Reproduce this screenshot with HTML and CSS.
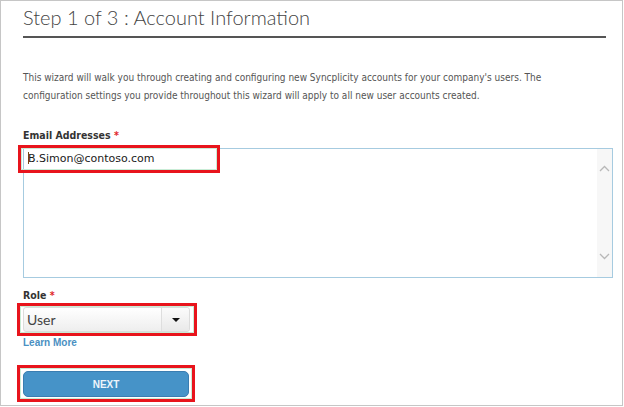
FILE: index.html
```html
<!DOCTYPE html>
<html>
<head>
<meta charset="utf-8">
<link rel="stylesheet" href="styles.css">
</head>
<body>
<div class="frame">
  <h1 class="title">Step 1 of 3 : Account Information</h1>
  <p class="intro">This wizard will walk you through creating and configuring new Syncplicity accounts for your company's users. The configuration settings you provide throughout this wizard will apply to all new user accounts created.</p>

  <div class="label">Email Addresses <span class="req">*</span></div>
  <div class="textarea">
    <div class="ta-content">
      <span class="caret"></span>B.Simon@contoso.com
    </div>
    <div class="ta-scroll">
      <svg class="chev" width="11" height="7" viewBox="0 0 11 7"><path d="M1 6 L5.5 1.5 L10 6" fill="none" stroke="#b8b8b8" stroke-width="1.3"/></svg>
      <svg class="chev" width="11" height="7" viewBox="0 0 11 7"><path d="M1 1 L5.5 5.5 L10 1" fill="none" stroke="#b8b8b8" stroke-width="1.3"/></svg>
    </div>
    <div class="mark mark-email"></div>
  </div>

  <div class="label role-label">Role <span class="req">*</span></div>
  <div class="select-wrap">
    <div class="select">
      <span class="select-value">User</span>
      <span class="select-btn"><span class="tri"></span></span>
    </div>
    <div class="mark mark-select"></div>
  </div>
  <a class="learn">Learn More</a>

  <div class="btn-wrap">
    <button class="next">NEXT</button>
    <div class="mark mark-next"></div>
  </div>
</div>
</body>
</html>
```

FILE: styles.css
```css
html, body {
  margin: 0;
  padding: 0;
  background: #fff;
}
.frame {
  box-sizing: border-box;
  width: 623px;
  height: 406px;
  border: 1px solid #c6c6c6;
  padding: 0 9px 0 22px;
  font-family: "DejaVu Sans Condensed", "Liberation Sans", sans-serif;
}
.title {
  margin: 0 7px 0 0;
  padding: 3px 0 0 0;
  height: 32px;
  border-bottom: 2px solid #555;
  font-family: Lato, "Open Sans", sans-serif;
  font-weight: 300;
  font-size: 20px;
  line-height: 26px;
  color: #444;
}
.intro {
  margin: 31px 0 0 0;
  max-width: 560px;
  font-size: 10px;
  line-height: 18px;
  color: #555;
}
.label {
  margin-top: 23px;
  font-size: 10.5px;
  line-height: 14px;
  font-weight: bold;
  color: #333;
}
.req {
  color: #e0262a;
}
.textarea {
  position: relative;
  margin-top: 6px;
  height: 130px;
  box-sizing: border-box;
  border: 1px solid #a6cbe0;
  display: flex;
}
.ta-content {
  flex: 1;
  padding: 3px 0 0 4px;
  font-family: "DejaVu Sans", sans-serif;
  font-size: 11px;
  line-height: 14px;
  color: #1a1a1a;
  position: relative;
}
.caret {
  display: inline-block;
  width: 1px;
  height: 12px;
  background: #7a4a10;
  vertical-align: -2px;
  margin-right: -1px;
}
.ta-scroll {
  width: 15px;
  background: #f7f7f7;
  display: flex;
  flex-direction: column;
  justify-content: space-between;
  align-items: center;
  padding: 16px 0 17px;
}
.chev {
  display: block;
}
.mark {
  position: absolute;
  border: 3px solid #e8141c;
  box-shadow: inset 0 0 0 1px #c9ecd6;
  pointer-events: none;
}
.mark-email {
  left: -6px;
  top: -4px;
  width: 196px;
  height: 22px;
}
.role-label {
  margin-top: 10px;
}
.select-wrap {
  position: relative;
  margin-top: 5px;
  width: 167px;
}
.select {
  box-sizing: border-box;
  height: 25px;
  border: 1px solid #dcdcdc;
  border-radius: 3px;
  background: linear-gradient(#ffffff, #eeeeee);
  display: flex;
  align-items: stretch;
}
.select-value {
  flex: 1;
  padding-left: 3px;
  font-family: Lato, "Open Sans", sans-serif;
  font-size: 14px;
  line-height: 23px;
  color: #444;
}
.select-btn {
  width: 27px;
  border-left: 1px solid #dedede;
  display: flex;
  align-items: center;
  justify-content: center;
  background: linear-gradient(#fbfbfb, #e9e9e9);
  border-radius: 0 3px 3px 0;
}
.tri {
  width: 0;
  height: 0;
  border-left: 4px solid transparent;
  border-right: 4px solid transparent;
  border-top: 4px solid #111;
}
.mark-select {
  left: -6px;
  top: -4px;
  right: -7px;
  bottom: -4px;
}
.learn {
  display: block;
  margin-top: 5px;
  font-family: "Liberation Sans", sans-serif;
  font-size: 10px;
  line-height: 11px;
  font-weight: bold;
  color: #4a90c2;
}
.btn-wrap {
  position: relative;
  margin-top: 23px;
  width: 166px;
}
.next {
  display: block;
  box-sizing: border-box;
  width: 166px;
  height: 26px;
  border: 1px solid #3a7db1;
  border-radius: 5px;
  background: #4693c8;
  color: #eef5fb;
  font-family: "Liberation Sans", sans-serif;
  font-weight: bold;
  font-size: 10px;
  padding: 0;
}
.mark-next {
  left: -6px;
  top: -6px;
  right: -6px;
  bottom: -5px;
}
```
